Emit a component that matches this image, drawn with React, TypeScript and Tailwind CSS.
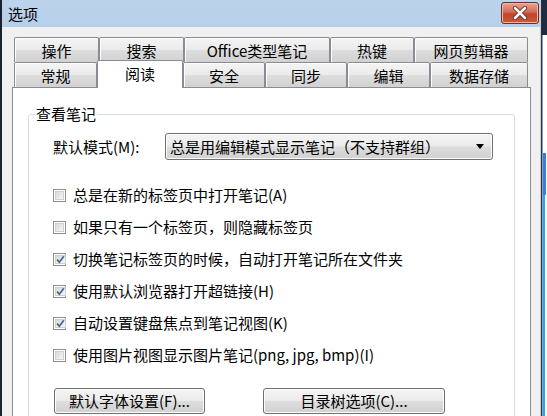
import type { ReactNode } from "react";

const font = "font-['Noto_Sans_CJK_SC','Noto_Sans',sans-serif]";

const winGradient =
  "bg-[linear-gradient(#f4f4f4,#ebebeb_48%,#dddddd_52%,#d1d1d1)]";

const topTabs = [
  { label: "操作", w: "w-[85px]" },
  { label: "搜索", w: "w-[85px]" },
  { label: "Office类型笔记", w: "w-[146px]" },
  { label: "热键", w: "w-[84px]" },
  { label: "网页剪辑器", w: "w-[114px]" },
];

const bottomTabs = [
  { label: "常规", w: "w-[83px]" },
  { label: "阅读", w: "w-[86px]", active: true },
  { label: "安全", w: "w-[82px]" },
  { label: "同步", w: "w-[82px]" },
  { label: "编辑", w: "w-[83px]" },
  { label: "数据存储", w: "w-[98px]" },
];

const options = [
  { label: "总是在新的标签页中打开笔记(A)", checked: false },
  { label: "如果只有一个标签页，则隐藏标签页", checked: false },
  { label: "切换笔记标签页的时候，自动打开笔记所在文件夹", checked: true },
  { label: "使用默认浏览器打开超链接(H)", checked: true },
  { label: "自动设置键盘焦点到笔记视图(K)", checked: true },
  { label: "使用图片视图显示图片笔记(png, jpg, bmp)(I)", checked: false },
];

function Tab({ label, w, active }: { label: string; w: string; active?: boolean }) {
  if (active) {
    return (
      <div
        className={`${w} relative z-10 -mb-px flex h-[28px] items-center justify-center rounded-t-[2px] border-x border-t border-[#898c95] bg-white pb-[2px]`}
      >
        {label}
      </div>
    );
  }
  return (
    <div
      className={`${w} flex h-[25px] items-center justify-center rounded-t-[2px] border-x border-t border-[#898c95] pt-[1px] shadow-[inset_1px_1px_0_#ffffff] ${winGradient}`}
    >
      {label}
    </div>
  );
}

function Checkbox({ checked }: { checked: boolean }) {
  return (
    <span className="flex h-[13px] w-[13px] shrink-0 border border-[#8e8f8f] bg-white p-px">
      <span className="flex flex-1 items-center justify-center border border-[#d0d0d0] bg-[linear-gradient(135deg,#d9d9d9,#f7f7f7)]">
        {checked && (
          <svg width="9" height="9" viewBox="0 0 9 9">
            <path
              d="M1.2 4.6 L3.4 7.2 L7.8 1.2"
              fill="none"
              stroke="#4b5f92"
              strokeWidth="1.7"
            />
          </svg>
        )}
      </span>
    </span>
  );
}

function Button({ w, children }: { w: string; children: ReactNode }) {
  return (
    <div
      className={`${w} flex h-[26px] items-center justify-center rounded-[3px] border border-[#707070] shadow-[inset_0_0_0_1px_#fcfcfc] ${winGradient}`}
    >
      {children}
    </div>
  );
}

export default function App() {
  return (
    <div
      className={`flex h-[416px] w-[547px] overflow-hidden bg-white text-[15px] leading-[20px] text-black ${font}`}
    >
      <div className="w-[2px] shrink-0 bg-[#1b2230]" />

      <div className="flex w-[539px] shrink-0 flex-col border-r border-[#c9ced6] bg-[#f0f0f0]">
        {/* title bar */}
        <div className="flex h-[27px] shrink-0 items-start justify-between bg-[linear-gradient(#bcd3ec,#b7cfe9)] pr-px pl-[6px]">
          <span className="pt-[4px]">选项</span>
          <div className="mt-[2px] flex h-[22px] w-[38px] items-center justify-center rounded-[3px] border border-[#6b2f28] bg-[linear-gradient(#e8a493,#d26a53_45%,#c2442b_55%,#cc5a3c)] shadow-[inset_0_0_0_1px_#f0b6a6]">
            <svg width="16" height="14" viewBox="0 0 16 14">
              <path
                d="M3 2 L13 12 M13 2 L3 12"
                stroke="#5a2620"
                strokeWidth="4.2"
                strokeLinecap="round"
              />
              <path
                d="M3 2 L13 12 M13 2 L3 12"
                stroke="#ffffff"
                strokeWidth="2.6"
                strokeLinecap="round"
              />
            </svg>
          </div>
        </div>

        {/* tabs + panel */}
        <div className="flex flex-1 flex-col pt-[10px] pr-[9px] pl-[10px]">
          <div className="flex pl-[2px]">
            {topTabs.map((t) => (
              <Tab key={t.label} label={t.label} w={t.w} />
            ))}
          </div>
          <div className="flex h-[25px] items-end pl-[2px]">
            {bottomTabs.map((t) => (
              <Tab key={t.label} label={t.label} w={t.w} active={t.active} />
            ))}
          </div>

          <div className="flex-1 border border-[#898c95] bg-white px-[15px] pt-[16px]">
            <fieldset className="h-[400px] rounded-[3px] border border-[#d5dfe5] px-[6px]">
              <legend className="px-px leading-[20px]">查看笔记</legend>
              <div className="pl-[18px]">
                <div className="mt-[9px] flex items-center">
                  <span className="w-[112px]">默认模式(M):</span>
                  <div className="flex h-[27px] w-[328px] items-center justify-between rounded-[3px] border border-[#707070] pr-[8px] pl-[4px] shadow-[inset_0_0_0_1px_#fcfcfc] bg-[linear-gradient(#f4f4f4,#ebebeb_48%,#dddddd_52%,#d1d1d1)]">
                    <span>总是用编辑模式显示笔记（不支持群组）</span>
                    <svg width="8" height="5" viewBox="0 0 8 5">
                      <path d="M0 0 H8 L4 5 Z" fill="#000000" />
                    </svg>
                  </div>
                </div>

                <div className="mt-[25px] flex flex-col gap-[12px]">
                  {options.map((o) => (
                    <div key={o.label} className="flex h-[20px] items-center gap-[7px]">
                      <Checkbox checked={o.checked} />
                      <span>{o.label}</span>
                    </div>
                  ))}
                </div>

                <div className="mt-[23px] flex gap-[58px] pl-px">
                  <Button w="w-[151px]">默认字体设置(F)...</Button>
                  <Button w="w-[182px]">目录树选项(C)...</Button>
                </div>
              </div>
            </fieldset>
          </div>
        </div>
      </div>

      {/* edge of the window behind */}
      <div className="flex flex-1 flex-col border-l border-[#2a3140]">
        <div className="h-[35px] bg-[#1f2c40]" />
        <div className="flex flex-1">
          <div className="w-px bg-[#7fa3c6]" />
          <div className="flex flex-1 flex-col bg-white">
            <div className="h-[118px]" />
            <div className="h-[42px] w-[3px] bg-[#3d7fd6]" />
            <div className="flex-1 border-l-2 border-[#29a9ea]" />
          </div>
        </div>
      </div>
    </div>
  );
}
